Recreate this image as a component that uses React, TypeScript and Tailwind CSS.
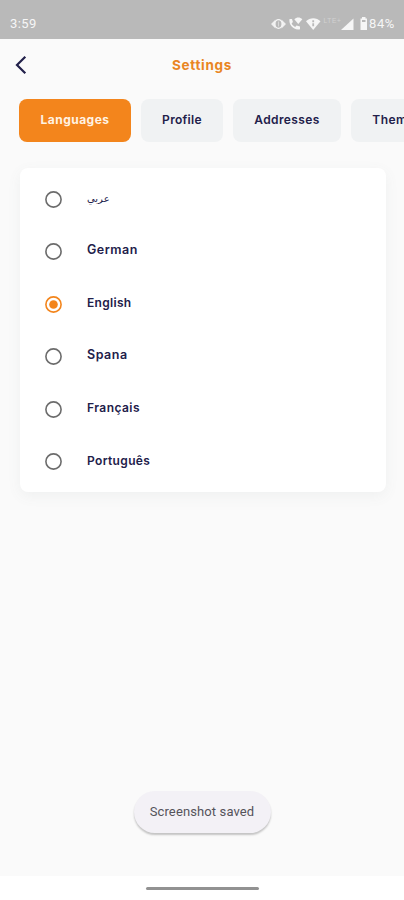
import React from "react";

const tabs = [
  { label: "Languages", width: "w-[112px]", spacing: "tracking-[0.48px]" },
  { label: "Profile", width: "w-[82px]", spacing: "tracking-[0.3px]" },
  { label: "Addresses", width: "w-[108px]", spacing: "tracking-[0.4px]" },
  { label: "Themes", width: "w-[92px]", spacing: "tracking-[0.4px]" },
];

const languages = [
  { label: "عربي", text: "text-[10px] font-normal pb-[2px]" },
  { label: "German", text: "text-[12.5px] font-semibold tracking-[0.5px] pb-[2px]" },
  { label: "English", text: "text-xs font-semibold tracking-[0.3px] pb-[2px]" },
  { label: "Spana", text: "text-[12.5px] font-semibold tracking-[0.5px] pb-[2px]" },
  { label: "Français", text: "text-xs font-semibold tracking-[0.45px] pb-[2px]" },
  { label: "Português", text: "text-xs font-semibold tracking-[0.35px] pb-[2px]" },
];

function StatusIcons() {
  return (
    <svg width="98" height="16" viewBox="0 0 98 16" fill="#f6f6f6">
      {/* eye */}
      <path d="M4.500 3.500v9L0 8zM10.500 3.500v9L15 8z" opacity="0.9" />
      <ellipse cx="7.500" cy="8" rx="3.600" ry="4.300" fill="#b9b9b9" stroke="#f6f6f6" strokeWidth="1.300" />
      <path d="M7.500 5.500v5" stroke="#f6f6f6" strokeWidth="1" opacity="0.5" />
      {/* call over wifi */}
      <path d="M18.500 3h2.500l.9 3-1.300 1.400c.9 1.700 2 2.700 3.600 3.500l1.300-1.300 3.500.8v2.800c-6 1.400-11.500-4-10.500-10.200z" />
      <path d="M23.300 3.300c2.400-2.300 5.600-2.300 8 0L27.300 8z" />
      {/* wifi */}
      <path d="M35 5.200c4-4 10.500-4 14.500 0L42.200 14z" />
      <path d="M42.200 4.300v2M42.200 7.300v3" stroke="#b9b9b9" strokeWidth="1.800" />
      <text x="52.500" y="7" fontSize="6.500" letterSpacing="0.700" opacity="0.4" fontFamily="Liberation Sans, sans-serif">LTE+</text>
      {/* signal and battery */}
      <path d="M82.500 2.500V14H70z" />
      <path d="M89.500 2.500h1.500V1h3.500v1.500H96V14h-6.500z" />
      <path d="M91 4h3.500v2H91z" fill="#b9b9b9" />
    </svg>
  );
}

function Radio({ checked }: { checked: boolean }) {
  return (
    <svg width="17" height="17" viewBox="0 0 17 17" fill="none" stroke={checked ? "#f3851c" : "#6c6c6c"}>
      <circle cx="8.500" cy="8.500" r="7.600" strokeWidth="1.600" />
      {checked && <circle cx="8.500" cy="8.500" r="4.300" fill="#f3851c" stroke="none" />}
    </svg>
  );
}

function App() {
  const selected = "English";

  return (
    <div className="flex h-[900px] w-[404px] flex-col overflow-hidden bg-[#fafafa] font-['Inter','DejaVu_Sans',sans-serif] text-[#22204a]">
      <div className="flex h-[39px] shrink-0 items-center justify-between bg-[#b9b9b9] pt-[9px] pr-[9px] pl-[10px] font-['Roboto',sans-serif] text-[13px] text-[#f6f6f6]">
        <span className="tracking-[0.4px]">3:59</span>
        <div className="flex items-center">
          <StatusIcons />
          <span className="tracking-[0.6px]">84%</span>
        </div>
      </div>

      <header className="grid h-[52px] shrink-0 grid-cols-[50px_1fr_50px] items-center">
        <svg className="ml-[15px]" width="12" height="20" viewBox="0 0 12 20" fill="none" stroke="#22204a" strokeWidth="2.2">
          <path d="M10.300 1.800L2 10l8.300 8.200" />
        </svg>
        <h1 className="text-center text-[13.5px] font-bold tracking-[0.7px] text-[#e98522]">Settings</h1>
      </header>

      <nav className="mt-2 flex h-[43px] shrink-0 gap-[10px] pl-[19px]">
        {tabs.map((tab, i) => (
          <button
            key={tab.label}
            className={`shrink-0 rounded-lg pb-[2px] text-xs ${tab.width} ${tab.spacing} ${
              i === 0 ? "bg-[#f3851c] font-bold text-[#fff3e3]" : "bg-[#f0f2f3] font-semibold"
            }`}
          >
            {tab.label}
          </button>
        ))}
      </nav>

      <ul className="mt-[26px] mr-[18px] ml-5 flex h-[324px] shrink-0 flex-col rounded-lg bg-white pt-[5px] pb-1 shadow-[0_4px_14px_rgba(100,120,120,0.07)]">
        {languages.map((lang) => (
          <li key={lang.label} className="flex flex-1 items-center pl-[25px]">
            <Radio checked={lang.label === selected} />
            <span className={`ml-[25px] ${lang.text}`}>{lang.label}</span>
          </li>
        ))}
      </ul>

      <div className="flex flex-1 items-end justify-center pb-[43px]">
        <div className="flex h-[42px] w-[137px] items-center justify-center rounded-full bg-[#f3f1f6] font-['Roboto',sans-serif] text-[13px] tracking-[0.12px] text-[#55535a] shadow-[0_2px_2px_rgba(0,0,0,0.22)]">
          Screenshot saved
        </div>
      </div>

      <div className="flex h-6 shrink-0 justify-center bg-white pt-[11px]">
        <div className="h-[3px] w-[113px] rounded-full bg-[#929292]" />
      </div>
    </div>
  );
}

export default App;
